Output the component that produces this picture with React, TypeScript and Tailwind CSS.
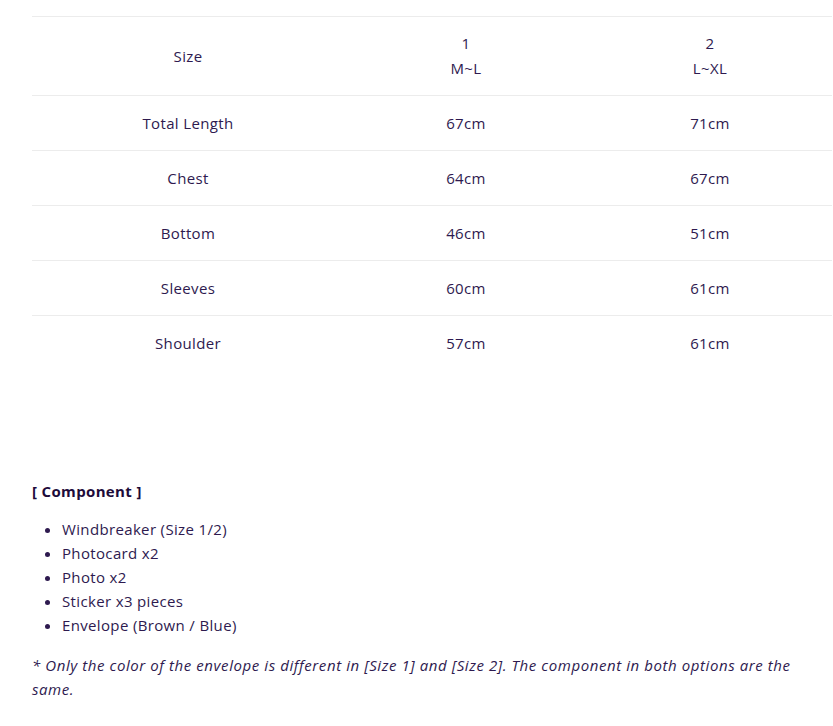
import React from "react";

const rows: [string, string, string][] = [
  ["Total Length", "67cm", "71cm"],
  ["Chest", "64cm", "67cm"],
  ["Bottom", "46cm", "51cm"],
  ["Sleeves", "60cm", "61cm"],
  ["Shoulder", "57cm", "61cm"],
];

export default function App() {
  return (
    <div
      className="bg-white w-[833px] h-[726px] overflow-hidden text-[15px] tracking-[0.35px] text-[#2e1a4f]"
      style={{ fontFamily: "'Open Sans', 'Noto Sans', sans-serif" }}
    >
      <div className="pt-4 pl-8 w-[833px]">
        <table className="w-[800px] border-collapse table-fixed">
          <colgroup>
            <col className="w-[312px]" />
            <col className="w-[244px]" />
            <col className="w-[244px]" />
          </colgroup>
          <tbody>
            <tr className="border-t border-[#ececec] h-[79px]">
              <td className="text-center leading-[25px]">Size</td>
              <td className="text-center leading-[25px]">
                1<br />M~L
              </td>
              <td className="text-center leading-[25px]">
                2<br />L~XL
              </td>
            </tr>
            {rows.map((r) => (
              <tr key={r[0]} className="border-t border-[#ececec] h-[55px]">
                <td className="text-center">{r[0]}</td>
                <td className="text-center">{r[1]}</td>
                <td className="text-center">{r[2]}</td>
              </tr>
            ))}
          </tbody>
        </table>
        <div className="mt-[108px]">
          <div className="font-bold text-[#1d0b3a] leading-6">[ Component ]</div>
          <ul className="list-disc pl-[30px] mt-[14px] leading-6">
            <li>Windbreaker (Size 1/2)</li>
            <li>Photocard x2</li>
            <li>Photo x2</li>
            <li>Sticker x3 pieces</li>
            <li>Envelope (Brown / Blue)</li>
          </ul>
          <p className="italic mt-[16px] leading-6 w-[772px] tracking-[0.58px]">
            * Only the color of the envelope is different in [Size 1] and [Size 2]. The component in both options are the same.
          </p>
        </div>
      </div>
    </div>
  );
}
